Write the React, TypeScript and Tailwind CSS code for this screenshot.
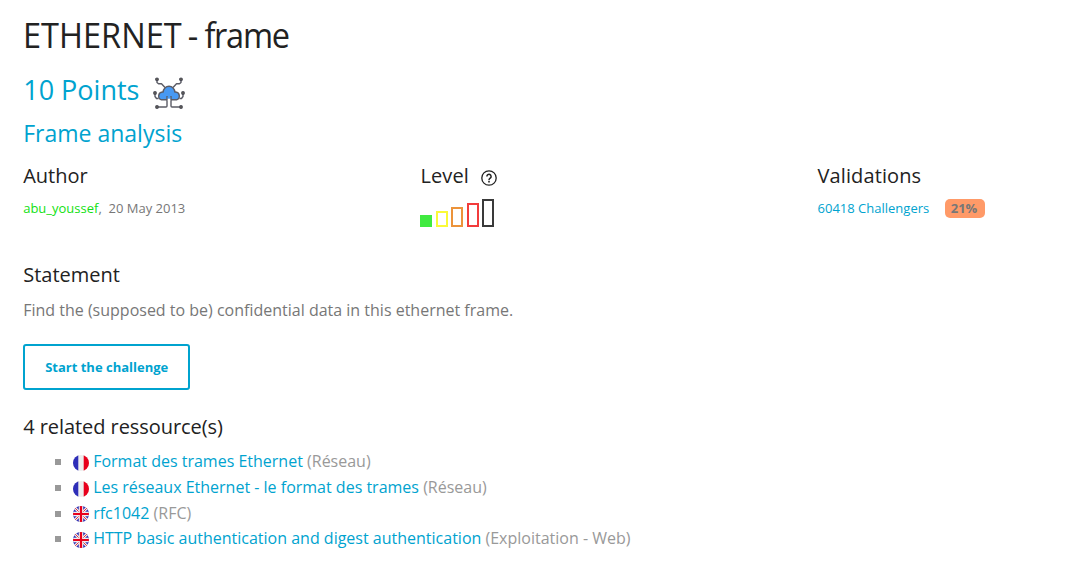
import type { ReactNode } from "react";

function NetworkIcon() {
  return (
    <svg className="h-8 w-8" viewBox="0 0 32 32" fill="none">
      <g stroke="#5b5c66" strokeWidth="1.4" strokeLinejoin="round">
        <path d="M4 2.500v3l1.500 1.200h3L12 10.500M28 2.500v3l-1.500 1.200h-3L20 10.500M2 16.500v3l1.500 2h2M30 16.500v3l-1.500 2h-2" />
        <path
          d="M8.500 22.800a4 4 0 0 1 .8-7.800h.9a5.800 5.800 0 0 1 11.600 0h.9a4 4 0 0 1 .8 7.800Z"
          fill="#4799f3"
        />
        <path d="M14 19v10a1 1 0 0 1-1 1H4M18 19v10a1 1 0 0 0 1 1h9" />
      </g>
      <path d="M14.700 20h2.600v1.700h-2.600z" fill="#4799f3" />
      <path d="M14.700 21.700h2.600V24h-2.600z" fill="#ffffff" />
      <g fill="#6b6653" stroke="#4b4c57" strokeWidth="1.200">
        <circle cx="4" cy="2.300" r="1.300" />
        <circle cx="28" cy="2.300" r="1.300" />
        <circle cx="2" cy="16" r="1.300" />
        <circle cx="30" cy="16" r="1.300" />
        <circle cx="4" cy="30" r="1.300" />
        <circle cx="28" cy="30" r="1.300" />
      </g>
    </svg>
  );
}

function FrenchFlag() {
  return (
    <svg className="h-4 w-4 rounded-full" viewBox="0 0 16 16">
      <path fill="#eeeeee" d="M0 0h16v16H0z" />
      <path fill="#2e2eb8" d="M0 0h5.300v16H0z" />
      <path fill="#e8001c" d="M10.700 0H16v16h-5.300z" />
    </svg>
  );
}

function BritishFlag() {
  return (
    <svg className="h-4 w-4 rounded-full" viewBox="0 0 16 16">
      <path fill="#3434b4" d="M0 0h16v16H0z" />
      <path stroke="#eeeeee" strokeWidth="2.800" d="M0 0l16 16M16 0L0 16" />
      <path stroke="#dc3045" strokeWidth="1" d="M0 0l16 16M16 0L0 16" />
      <path stroke="#eeeeee" strokeWidth="4.400" d="M8 0v16M0 8h16" />
      <path stroke="#e8001c" strokeWidth="2.200" d="M8 0v16M0 8h16" />
    </svg>
  );
}

function Heading({ children }: { children: ReactNode }) {
  return (
    <h4 className="h-[30px] text-[20px] leading-[32px] whitespace-nowrap text-[#222222]">
      {children}
    </h4>
  );
}

function LevelMeter() {
  return (
    <div className="flex h-7 items-end gap-[3.500px]">
      <i className="h-3 w-3 bg-[#40ea40]" />
      <i className="h-4 w-3 border-2 border-[#fafa38]" />
      <i className="h-5 w-3 border-2 border-[#ec933a]" />
      <i className="h-6 w-3 border-2 border-[#f23c3c]" />
      <i className="h-7 w-3 border-2 border-[#3a3a3a]" />
    </div>
  );
}

const resources = [
  { flag: "fr", title: "Format des trames Ethernet", category: "Réseau" },
  { flag: "fr", title: "Les réseaux Ethernet - le format des trames", category: "Réseau" },
  { flag: "en", title: "rfc1042", category: "RFC" },
  { flag: "en", title: "HTTP basic authentication and digest authentication", category: "Exploitation - Web" },
];

export default function App() {
  return (
    <main className="h-[572px] w-[1072px] overflow-hidden bg-white pl-[23.200px] font-['Open_Sans',sans-serif] text-[#777777]">
      <h1 className="mt-[10px] h-[50px] w-max origin-left scale-x-[0.93] text-[35px] leading-[50px] [word-spacing:-2.500px] text-[#222222]">
        ETHERNET - <span className="tracking-[-1.400px]">frame</span>
      </h1>
      <div className="flex h-[56px] items-center text-[27px] leading-[56px] text-[#00a3cf]">
        <span className="mt-[3px]">10 Points</span>
        <span className="mt-[9px] ml-[13.500px]">
          <NetworkIcon />
        </span>
      </div>
      <h3 className="mt-[2px] h-[30px] text-[23px] leading-[30px] text-[#00a3cf]">Frame analysis</h3>
      <div className="mt-[12px] flex h-[90px]">
        <section className="w-[397.200px]">
          <Heading>Author</Heading>
          <p className="mt-[8px] text-[13px] leading-5">
            <a className="text-[#12df12]">abu_youssef</a>,&nbsp; 20 May 2013
          </p>
        </section>
        <section className="w-[397.200px]">
          <div className="flex items-center tracking-[0.150px]">
            <Heading>Level</Heading>
            <svg className="mt-[5px] ml-[12px] h-4 w-4" viewBox="0 0 16 16" fill="none" stroke="#222222" strokeWidth="1.300">
              <circle cx="8" cy="8" r="7.200" />
              <path d="M5.900 6.500a2.100 2.100 0 1 1 3.400 1.600C8.500 8.700 8 9 8 10" strokeWidth="1.500" />
              <path d="M8 10.800v1.600" strokeWidth="1.600" />
            </svg>
          </div>
          <div className="mt-[9px]">
            <LevelMeter />
          </div>
        </section>
        <section>
          <div className="tracking-[0.100px]">
            <Heading>Validations</Heading>
          </div>
          <p className="mt-[8px] flex text-[13px] leading-5">
            <a className="text-[#00a3cf]">60418 Challengers</a>
            <span className="mt-px ml-[15.500px] h-[19px] rounded-[5px] bg-[#ff9a68] pr-2 pl-[6px] leading-[19px] font-bold">21%</span>
          </p>
        </section>
      </div>
      <div className="mt-[9px]">
        <Heading>Statement</Heading>
      </div>
      <p className="mt-[9px] text-[16px] leading-6">
        Find the (supposed to be) confidential data in this ethernet frame.
      </p>
      <button className="mt-[22px] block h-[46px] w-[167px] rounded-[3px] border-2 border-[#00a3cf] pt-[2px] text-[13px] font-bold text-[#00a3cf]">
        Start the challenge
      </button>
      <div className="mt-[21px] tracking-[-0.060px]">
        <Heading>4 related ressource(s)</Heading>
      </div>
      <ul className="mt-[7px] text-[16px]">
        {resources.map((r) => (
          <li key={r.title} className="flex h-[26px] items-center pl-8 leading-6 whitespace-pre text-[#999999] last:-mt-px [&:nth-child(3)>span]:mt-[2px]">
            <i className="mt-[2px] h-[6px] w-[6px] bg-[#999999]" />
            <span className="mt-[4px] mr-1 ml-3">{r.flag === "fr" ? <FrenchFlag /> : <BritishFlag />}</span>
            <a className="text-[#00a3cf]">{r.title}</a> ({r.category})
          </li>
        ))}
      </ul>
    </main>
  );
}
